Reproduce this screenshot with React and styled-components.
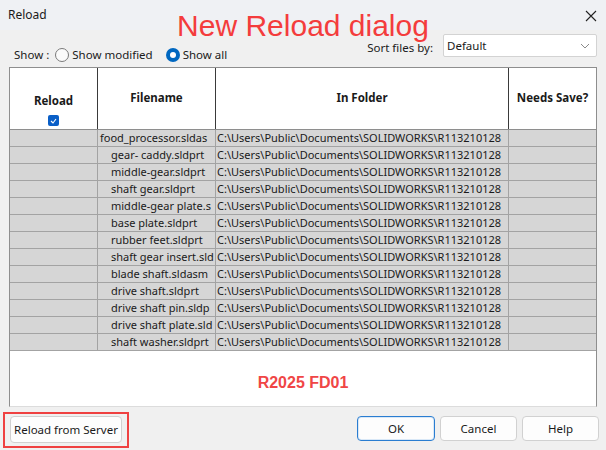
import React from 'react';
import styled, { createGlobalStyle } from 'styled-components';

const GlobalStyle = createGlobalStyle`
  html, body {
    margin: 0;
    padding: 0;
    background: #f0f0f0;
  }
  body {
    font-family: "Noto Sans", "Open Sans", sans-serif;
    color: #1a1a1a;
  }
`

const Dialog = styled.div`
  position: relative;
  width: 606px;
  height: 450px;
  display: flex;
  flex-direction: column;
  background: #f0f0f0;
  overflow: hidden;
`

const TitleBar = styled.div`
  height: 30px;
  flex: none;
  display: flex;
  align-items: center;
  justify-content: space-between;
  padding: 0 9px 0 8px;
  background: #eff1f4;
  font-size: 12px;
  box-sizing: border-box;

  & > span {
    margin-top: -2px;
  }
`

const CloseButton = styled.div`
  width: 12px;
  height: 12px;
  display: flex;
  margin-top: 2px;
`

const Annotation = styled.div`
  position: absolute;
  left: 0;
  right: 0;
  top: 11px;
  text-align: center;
  font-family: "Liberation Sans", Arial, sans-serif;
  font-size: 30px;
  line-height: 30px;
  color: #f43c3c;
  pointer-events: none;
`

const Toolbar = styled.div`
  height: 37px;
  flex: none;
  display: flex;
  justify-content: space-between;
  padding: 0 9px 0 14px;
  box-sizing: border-box;
  font-size: 11.5px;
`

const ShowGroup = styled.div`
  align-self: flex-end;
  display: flex;
  align-items: center;
  padding-bottom: 4px;
  line-height: 16px;
`

const RadioLabel = styled.label`
  display: flex;
  align-items: center;
  gap: 3px;
  margin-left: ${props => props.$gap}px;
`

const Radio = styled.span`
  width: 14px;
  height: 14px;
  box-sizing: border-box;
  border-radius: 50%;
  border: 1px solid #7a7a7a;
  background: #fbfbfb;
  display: flex;
  align-items: center;
  justify-content: center;

  ${props => props.$checked && `
    border: none;
    background: #0067c0;
    &::after {
      content: '';
      width: 6px;
      height: 6px;
      border-radius: 50%;
      background: #fff;
    }
  `}
`

const SortGroup = styled.div`
  align-self: flex-start;
  display: flex;
  align-items: center;
  gap: 10px;
  margin-top: 4px;
  line-height: 16px;

  & > span {
    margin-top: 4px;
  }
`

const Select = styled.div`
  width: 154px;
  height: 23px;
  box-sizing: border-box;
  border: 1px solid #d3d3d3;
  border-radius: 2px;
  background: #fff;
  display: flex;
  align-items: center;
  justify-content: space-between;
  padding: 0 6px 0 3px;
`

const Table = styled.div`
  flex: 1;
  margin: 0 9px;
  display: flex;
  flex-direction: column;
  border: 1px solid #8e8e8e;
  border-bottom-color: #dcdcdc;
  background: #fff;
  font-size: 11.5px;
`

const HeaderRow = styled.div`
  display: grid;
  grid-template-columns: 88px 118px 293px 1fr;
  height: 62px;
  box-sizing: border-box;
  border-bottom: 1px solid #8e8e8e;
`

const HeaderCell = styled.div`
  display: flex;
  flex-direction: column;
  align-items: center;
  justify-content: ${props => props.$top ? 'flex-start' : 'center'};
  padding-top: ${props => props.$top ? '25px' : '0'};
  padding-bottom: ${props => props.$top ? '0' : '2px'};
  border-right: 1px solid #3a3a3a;
  font-weight: 700;
  line-height: 16px;

  &:last-child {
    border-right: none;
  }
`

const CheckBox = styled.span`
  width: 11px;
  height: 11px;
  margin-top: 6px;
  border-radius: 2px;
  background: #0a5fc7;
  display: flex;
  align-items: center;
  justify-content: center;
`

const Row = styled.div`
  display: grid;
  grid-template-columns: 88px 118px 293px 1fr;
  height: 17px;
  box-sizing: border-box;
  border-bottom: 1px solid #a3a3a3;
  background: #d6d6d6;
  font-size: 11px;
`

const Cell = styled.div`
  border-right: 1px solid #a3a3a3;
  white-space: nowrap;
  overflow: hidden;
  line-height: 16px;
  padding-left: ${props => props.$indent || 0}px;

  &:last-child {
    border-right: none;
  }
`

const Filler = styled.div`
  flex: 1;
  text-align: center;
  padding-top: 23px;
  font-family: "Liberation Sans", Arial, sans-serif;
  font-weight: 700;
  font-size: 16px;
  line-height: 18px;
  color: #f04646;
`

const Footer = styled.div`
  height: 43px;
  flex: none;
  display: flex;
  align-items: flex-start;
  justify-content: space-between;
  padding: 5px 7px 0 3px;
  box-sizing: border-box;
`

const Highlight = styled.div`
  border: 2px solid #ef4141;
  padding: 2px 5px 3px 5px;
`

const ButtonGroup = styled.div`
  display: flex;
  gap: 5px;
  margin-top: 4px;
`

const Button = styled.button`
  height: ${props => props.$tall ? 27 : 25}px;
  width: ${props => props.$width}px;
  box-sizing: border-box;
  border: 1px solid ${props => props.$primary ? '#2a7dd1' : '#d1d1d1'};
  border-radius: 4px;
  background: #fdfdfd;
  font-family: "Noto Sans", "Open Sans", sans-serif;
  font-size: 11.5px;
  color: #1a1a1a;
  padding: 0;
  box-shadow: ${props => props.$primary ? 'inset 0 0 0 1px #d9e8f7' : 'none'};
`

// names as the narrow column shows them (clipped at a whole letter)
const files = [
  'food_processor.sldas',
  'gear- caddy.sldprt',
  'middle-gear.sldprt',
  'shaft gear.sldprt',
  'middle-gear plate.s',
  'base plate.sldprt',
  'rubber feet.sldprt',
  'shaft gear insert.sld',
  'blade shaft.sldasm',
  'drive shaft.sldprt',
  'drive shaft pin.sldp',
  'drive shaft plate.sld',
  'shaft washer.sldprt',
]

const folder = 'C:\\Users\\Public\\Documents\\SOLIDWORKS\\R113210128'

export default function App () {
  return (
    <Dialog>
      <GlobalStyle />
      <TitleBar>
        <span>Reload</span>
        <CloseButton>
          <svg width="12" height="12" viewBox="0 0 12 12">
            <path d="M1 1 L11 11 M11 1 L1 11" stroke="#222" strokeWidth="1.1" fill="none" />
          </svg>
        </CloseButton>
      </TitleBar>
      <Annotation>New Reload dialog</Annotation>

      <Toolbar>
        <ShowGroup>
          <span>Show :</span>
          <RadioLabel $gap={6}><Radio />Show modified</RadioLabel>
          <RadioLabel $gap={13}><Radio $checked />Show all</RadioLabel>
        </ShowGroup>
        <SortGroup>
          <span>Sort files by:</span>
          <Select>
            <span>Default</span>
            <svg width="10" height="6" viewBox="0 0 10 6">
              <path d="M1 1 L5 5 L9 1" stroke="#8a8a8a" strokeWidth="1" fill="none" />
            </svg>
          </Select>
        </SortGroup>
      </Toolbar>

      <Table>
        <HeaderRow>
          <HeaderCell $top>
            Reload
            <CheckBox>
              <svg width="7" height="6" viewBox="0 0 7 6">
                <path d="M1 3 L3 5 L6 1" stroke="#fff" strokeWidth="1.1" fill="none" />
              </svg>
            </CheckBox>
          </HeaderCell>
          <HeaderCell>Filename</HeaderCell>
          <HeaderCell>In Folder</HeaderCell>
          <HeaderCell>Needs Save?</HeaderCell>
        </HeaderRow>
        {files.map((name, i) => (
          <Row key={name}>
            <Cell />
            <Cell $indent={i === 0 ? 2 : 13}>{name}</Cell>
            <Cell $indent={1}>{folder}</Cell>
            <Cell />
          </Row>
        ))}
        <Filler>R2025 FD01</Filler>
      </Table>

      <Footer>
        <Highlight>
          <Button $width={112} $tall>Reload from Server</Button>
        </Highlight>
        <ButtonGroup>
          <Button $width={78} $primary>OK</Button>
          <Button $width={77}>Cancel</Button>
          <Button $width={77}>Help</Button>
        </ButtonGroup>
      </Footer>
    </Dialog>
  )
}
